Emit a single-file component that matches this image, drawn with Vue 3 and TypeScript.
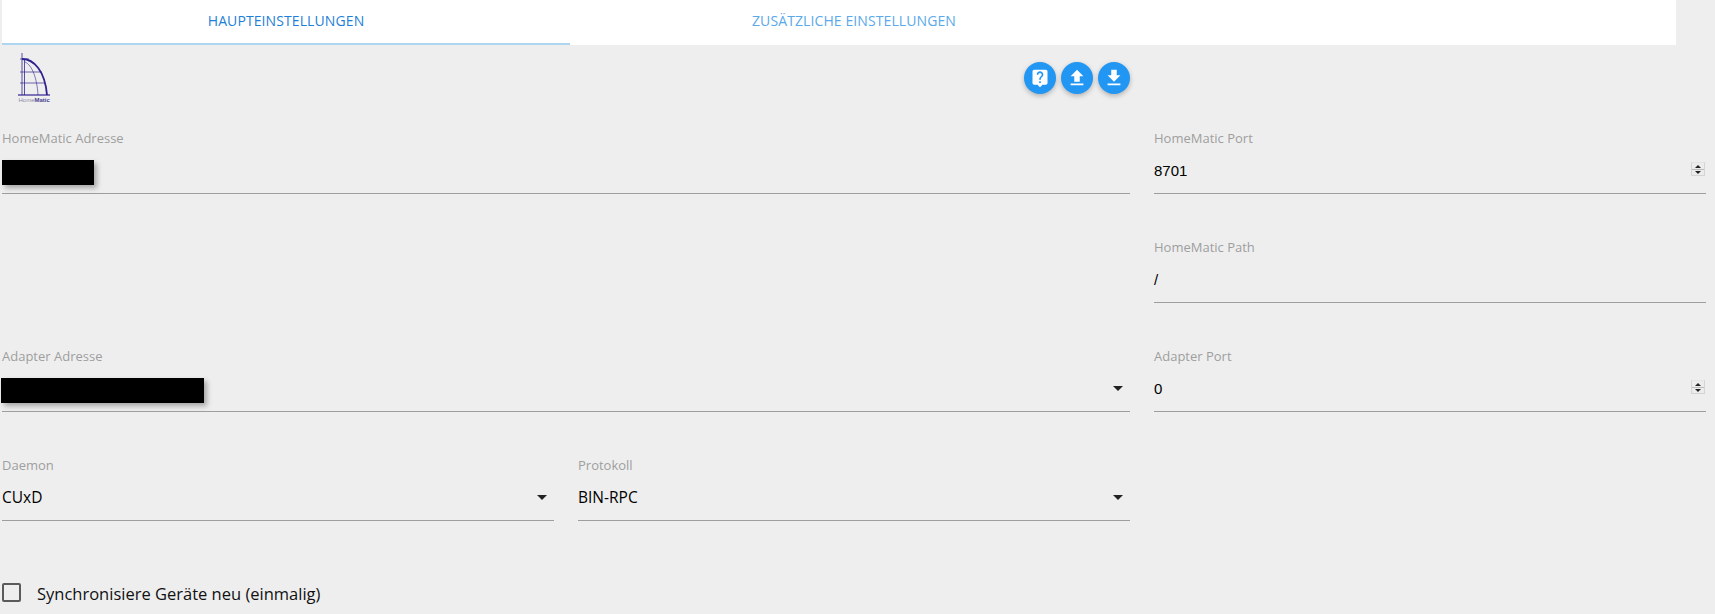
<script setup lang="ts">
const tabs = [
  { title: 'HAUPTEINSTELLUNGEN', active: true },
  { title: 'ZUSÄTZLICHE EINSTELLUNGEN', active: false },
];

const actions = [
  { name: 'help', size: 20, path: 'M19 2H5c-1.11 0-2 .9-2 2v14c0 1.1.89 2 2 2h4l3 3 3-3h4c1.1 0 2-.9 2-2V4c0-1.1-.9-2-2-2zm-6 16h-2v-2h2v2zm2.07-7.75l-.9.92C13.45 11.9 13 12.5 13 14h-2v-.5c0-1.1.45-2.1 1.17-2.83l1.24-1.26c.37-.36.59-.86.59-1.41 0-1.1-.9-2-2-2s-2 .9-2 2H8c0-2.21 1.79-4 4-4s4 1.79 4 4c0 .88-.36 1.68-.93 2.25z' },
  { name: 'upload', size: 22, path: 'M9 16h6v-6h4l-7-7-7 7h4zm-4 2h14v2H5z' },
  { name: 'download', size: 22, path: 'M19 9h-4V3H9v6H5l7 7 7-7zM5 18v2h14v-2H5z' },
];
</script>

<template>
  <div class="page">
    <nav class="tabs">
      <a v-for="tab in tabs" :key="tab.title" class="tab" :class="{ active: tab.active }">{{ tab.title }}</a>
    </nav>

    <div class="toolbar">
      <svg class="logo" viewBox="0 0 34 50" width="34" height="50">
        <g fill="none" stroke="#2f2390">
          <path d="M5 1v42" stroke-width="0.8" />
          <path d="M7.5 8v35" stroke-width="0.8" />
          <path d="M5 7c12 0 23 12 25 36" stroke-width="1.8" />
          <path d="M8 10c7 3 12 16 13 33" stroke-width="0.6" />
          <path d="M3 7h9M3 20h22M3 31h25" stroke-width="0.7" />
          <path d="M1 43h32" stroke-width="1.2" />
        </g>
        <text x="1.5" y="49.5" class="logo-text">Home<tspan class="logo-strong">Matic</tspan></text>
      </svg>
      <div class="actions">
        <button v-for="action in actions" :key="action.name" class="fab" type="button">
          <svg viewBox="0 0 24 24" :width="action.size" :height="action.size"><path :d="action.path" fill="#fff" /></svg>
        </button>
      </div>
    </div>

    <form class="form">
      <div class="field">
        <label>HomeMatic Adresse</label>
        <div class="value"><span class="redacted short"></span></div>
      </div>
      <div class="field">
        <label>HomeMatic Port</label>
        <div class="value number">8701<span class="spinner"></span></div>
      </div>

      <div></div>
      <div class="field">
        <label>HomeMatic Path</label>
        <div class="value number">/</div>
      </div>

      <div class="field">
        <label>Adapter Adresse</label>
        <div class="value"><span class="redacted long"></span><span class="caret"></span></div>
      </div>
      <div class="field">
        <label>Adapter Port</label>
        <div class="value number">0<span class="spinner"></span></div>
      </div>

      <div class="pair">
        <div class="field">
          <label>Daemon</label>
          <div class="value select">CUxD<span class="caret"></span></div>
        </div>
        <div class="field">
          <label>Protokoll</label>
          <div class="value select">BIN-RPC<span class="caret"></span></div>
        </div>
      </div>
    </form>

    <label class="check">
      <span class="box"></span>
      Synchronisiere Geräte neu (einmalig)
    </label>
  </div>
</template>

<style>
html,
body {
  margin: 0;
  background: #eee;
}
</style>

<style scoped>
.page {
  width: 1715px;
  height: 614px;
  overflow: hidden;
  background: #eeeeee;
  font-family: "Open Sans", "Noto Sans", sans-serif;
  box-sizing: border-box;
  padding-left: 2px;
}

.tabs {
  display: flex;
  width: 1674px;
  height: 45px;
  background: #fff;
}

.tab {
  width: 568px;
  height: 45px;
  box-sizing: border-box;
  line-height: 42px;
  text-align: center;
  font-size: 14px;
  letter-spacing: 0.1px;
  color: #5aa9ea;
}

.tab.active {
  color: #1e7fd6;
  border-bottom: 2px solid #aed6f1;
}

.toolbar {
  display: flex;
  height: 85px;
}

.logo {
  margin: 7px 0 0 15px;
}

.logo-text {
  font-family: "Liberation Sans", sans-serif;
  font-size: 6px;
  fill: #8d8ba8;
}

.logo-strong {
  font-weight: 700;
  fill: #4a4390;
}

.actions {
  display: flex;
  gap: 5px;
  margin: 17px 0 0 973px;
  align-items: flex-start;
}

.fab {
  width: 32px;
  height: 32px;
  padding: 0;
  border: 0;
  border-radius: 50%;
  background: #2196f3;
  display: flex;
  align-items: center;
  justify-content: center;
  box-shadow: 0 2px 5px rgba(0, 0, 0, 0.26);
}

.form {
  display: grid;
  grid-template-columns: 1128px 552px;
  column-gap: 24px;
  row-gap: 45px;
}

.pair {
  display: grid;
  grid-template-columns: 552px 552px;
  column-gap: 24px;
}

.field {
  height: 64px;
  box-sizing: border-box;
  border-bottom: 1px solid #9e9e9e;
  position: relative;
}

.field label {
  display: block;
  height: 20px;
  line-height: 16px;
  font-size: 13px;
  color: #9e9e9e;
}

.value {
  display: flex;
  align-items: center;
  box-sizing: border-box;
  height: 43px;
  font-size: 15px;
  color: #000;
}

.value.select {
  padding-bottom: 4px;
  font-size: 15.5px;
}

.value.number {
  padding-bottom: 2px;
  font-family: "Liberation Sans", sans-serif;
}

.redacted {
  display: block;
  height: 25px;
  margin-top: 2px;
  background: #000;
  box-shadow: 3px 3px 5px rgba(0, 0, 0, 0.3);
}

.redacted.short {
  width: 92px;
}

.redacted.long {
  width: 203px;
  margin-left: -1px;
}

.caret {
  position: absolute;
  right: 7px;
  top: 38px;
  border-left: 5px solid transparent;
  border-right: 5px solid transparent;
  border-top: 5px solid #222;
}

.spinner {
  position: absolute;
  right: 1px;
  top: 32px;
  width: 14px;
  height: 14px;
  box-sizing: border-box;
  border: 1px solid #d4d4d4;
  border-top-color: #e4e4e4;
  background:
    linear-gradient(#bbb, #bbb) center / 100% 1px no-repeat,
    #ececec;
}

.spinner::before,
.spinner::after {
  content: "";
  position: absolute;
  left: 2.5px;
  border-left: 3.5px solid transparent;
  border-right: 3.5px solid transparent;
}

.spinner::before {
  top: 1.5px;
  border-bottom: 3.5px solid #222;
}

.spinner::after {
  bottom: 1.5px;
  border-top: 3.5px solid #222;
}

.check {
  display: flex;
  align-items: center;
  gap: 16px;
  margin-top: 61px;
  font-size: 16.5px;
  color: #111;
}

.box {
  width: 19px;
  height: 19px;
  margin-top: -3px;
  box-sizing: border-box;
  border: 2px solid #5a5a5a;
  border-radius: 2px;
}
</style>
